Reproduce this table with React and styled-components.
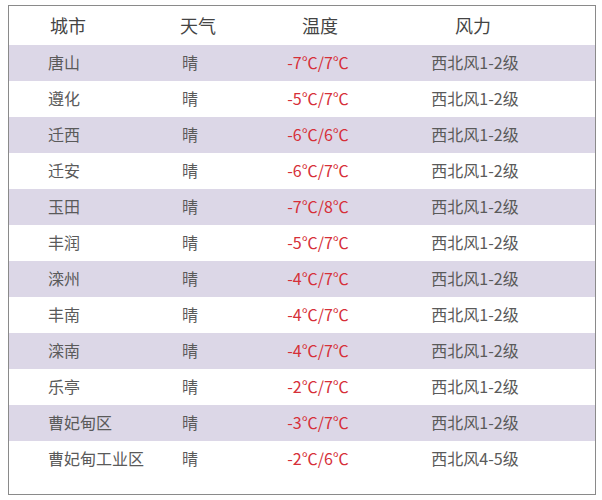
import React from 'react';
import styled, { createGlobalStyle } from 'styled-components';

const GlobalStyle = createGlobalStyle`
  body {
    margin: 0;
    background: #ffffff;
    font-family: "Noto Sans CJK SC", "Noto Sans", sans-serif;
  }
`;

const rows = [
  ['唐山', '晴', '-7℃/7℃', '西北风1-2级'],
  ['遵化', '晴', '-5℃/7℃', '西北风1-2级'],
  ['迁西', '晴', '-6℃/6℃', '西北风1-2级'],
  ['迁安', '晴', '-6℃/7℃', '西北风1-2级'],
  ['玉田', '晴', '-7℃/8℃', '西北风1-2级'],
  ['丰润', '晴', '-5℃/7℃', '西北风1-2级'],
  ['滦州', '晴', '-4℃/7℃', '西北风1-2级'],
  ['丰南', '晴', '-4℃/7℃', '西北风1-2级'],
  ['滦南', '晴', '-4℃/7℃', '西北风1-2级'],
  ['乐亭', '晴', '-2℃/7℃', '西北风1-2级'],
  ['曹妃甸区', '晴', '-3℃/7℃', '西北风1-2级'],
  ['曹妃甸工业区', '晴', '-2℃/6℃', '西北风4-5级']
];

const App = () => {
  return (
    <>
      <GlobalStyle />
      <Table>
        <HeadRow>
          <Cell pad={41}>城市</Cell>
          <Cell pad={41}>天气</Cell>
          <Cell center>温度</Cell>
          <Cell center>风力</Cell>
        </HeadRow>
        {rows.map((r, i) => (
          <Row key={r[0]} striped={i % 2 === 0}>
            <Cell pad={39}>{r[0]}</Cell>
            <Cell pad={43}>{r[1]}</Cell>
            <Temp center>{r[2]}</Temp>
            <Cell center shift={2}>{r[3]}</Cell>
          </Row>
        ))}
      </Table>
    </>
  );
};

const Table = styled.div`
  margin: 5px 6px 0 8px;
  width: 586px;
  height: 488px;
  border: 1px solid #8a8a8a;
  box-sizing: content-box;
  background: #ffffff;
  display: flex;
  flex-direction: column;
`;

const Grid = styled.div`
  display: grid;
  grid-template-columns: 130px 100px 162px 144px 1fr;
  align-items: center;
`;

const HeadRow = styled(Grid)`
  height: 39px;
  font-size: 18px;
  color: #444444;
`;

const Row = styled(Grid)`
  height: 36px;
  font-size: 16px;
  color: #5a5a5a;
  background: ${props => (props.striped ? '#dcd7e7' : '#ffffff')};
`;

const Cell = styled.div`
  padding-left: ${props => (props.pad ? `${props.pad}px` : '0')};
  text-align: ${props => (props.center ? 'center' : 'left')};
  transform: translate(${props => (props.shift ? `${props.shift}px` : '0')}, -1px);
  white-space: nowrap;
  line-height: 1;
`;

const Temp = styled(Cell)`
  color: #d62f38;
  margin-left: -4px;
`;

export default App;
